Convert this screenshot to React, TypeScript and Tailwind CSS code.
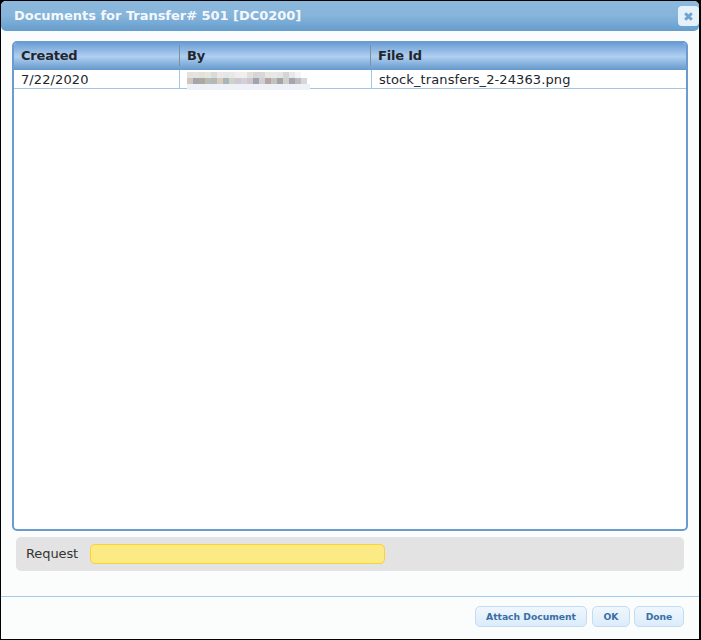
const font = "font-['DejaVu_Sans',Verdana,sans-serif]";

const topRow = ["#e4e1df", "#e6e3e0", "#e3e2d9", "#e7e5e0", "#d9dbd9", "#e9e8e6", "#e6e7e3", "#e8e7ea", "#efeeec", "#f0efeb", "#e0e0df", "#d8d6d5", "#d9d7d6", "#e6e6e3", "#e9e8e8", "#e5e5e6", "#d5d5d6", "#e8e8e8", "#f3f4f6"];
const midRow = ["#d0c6be", "#a3a6aa", "#aaaa9e", "#b9bcb6", "#b1b9b9", "#d6ccba", "#aab4bb", "#cfd3c3", "#cdc8d6", "#d5cfdb", "#d0c8c8", "#9fa4ae", "#d0ced2", "#b7a3a8", "#c0c4c0", "#a2a4a8", "#cfd0c8", "#a5a4b0", "#bcbcb8", "#d4d8dc"];

function Head({ label, className }: { label: string; className: string }) {
  return (
    <div className={`flex items-center pl-[7px] border-r border-[#7f8f9f] h-[21px] ${className}`}>
      {label}
    </div>
  );
}

function Btn({ label, className }: { label: string; className: string }) {
  return (
    <button className={`h-[21px] rounded-[5px] border border-[#c3dcf2] bg-gradient-to-b from-[#f0f7fd] to-[#dbecfb] text-[9.2px] font-bold text-[#3a6ea5] ${className}`}>
      {label}
    </button>
  );
}

export default function App() {
  return (
    <div className={`${font} w-[701px] h-[640px] bg-black p-px pr-0.5 overflow-hidden`}>
      <div className="flex flex-col h-[638px] w-[698px] bg-[#fbfdfd] rounded-t-[5px]">
        {/* title bar */}
        <div className="relative flex items-center shrink-0 h-[30px] pl-[13px] rounded-[5px] bg-gradient-to-b from-[#8cb8dc] via-[#86b4da] to-[#659dcd] text-[13px] font-bold text-[#f4f8fc] tracking-[-0.03px]">
          Documents for Transfer# 501 [DC0200]
          <div className="absolute right-0 top-[5px] flex items-center justify-center w-[21px] h-[20px] rounded-[4px] bg-[#e4f0fa]">
            <svg width="11" height="11" viewBox="0 0 11 11">
              <path d="M2.2 2.2 L8.8 8.8 M8.8 2.2 L2.2 8.8" stroke="#6fa3d0" strokeWidth="3" />
            </svg>
          </div>
        </div>

        {/* grid */}
        <div className="mt-[10px] ml-[11px] w-[676px] h-[490px] shrink-0 rounded-[5px] border-2 border-[#6b9bcf] bg-white overflow-hidden">
          <div className="flex items-center h-[27px] pb-[2px] bg-gradient-to-b from-[#6c9fd6] via-[#b0cff0] to-[#6499cd] text-[13px] font-bold text-[#22262c] tracking-[-0.2px]">
            <Head label="Created" className="w-[166px]" />
            <Head label="By" className="w-[191px]" />
            <div className="pl-[7px]">File Id</div>
          </div>
          <div className="relative flex h-[19px] border-b border-[#a3c6e8] text-[13px] text-[#22262c] tracking-[0.1px]">
            <div className="w-[166px] pl-[7px] border-r border-[#a3c6e8] leading-[20px]">7/22/2020</div>
            <div className="w-[192px] border-r border-[#a3c6e8]" />
            <div className="pl-[7px] leading-[20px]">stock_transfers_2-24363.png</div>
            {/* blurred name */}
            <div className="absolute left-[173px] top-[2px]">
              <div className="flex">
                {topRow.map((c, i) => (
                  <div key={i} className="w-[6px] h-[6px]" style={{ backgroundColor: c }} />
                ))}
              </div>
              <div className="flex">
                {midRow.map((c, i) => (
                  <div key={i} className="w-[6px] h-[6px]" style={{ backgroundColor: c }} />
                ))}
              </div>
              <div className="w-[123px] h-[6px] bg-[#eef1f7]" />
            </div>
          </div>
        </div>

        {/* request */}
        <div className="flex items-center shrink-0 mt-[6px] ml-[15px] w-[668px] h-[34px] rounded-[5px] bg-[#e3e3e3] pl-[10px] text-[13px] text-[#333] tracking-[-0.1px]">
          <span className="w-[64px]">Request</span>
          <div className="w-[295px] h-[20px] rounded-[5px] border border-[#fcd22f] bg-[#fcea85]" />
        </div>

        {/* footer */}
        <div className="flex justify-end gap-[4px] shrink-0 mt-[25px] pt-[9px] pr-[15px] h-[43px] border-t border-[#a3cbeb]">
          <Btn label="Attach Document" className="w-[112px] mr-px" />
          <Btn label="OK" className="w-[38px]" />
          <Btn label="Done" className="w-[50px]" />
        </div>
      </div>
    </div>
  );
}
